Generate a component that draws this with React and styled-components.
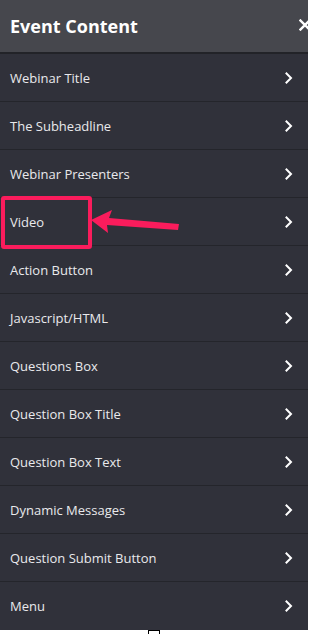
import React from "react";
import styled, { createGlobalStyle } from "styled-components";

const GlobalStyle = createGlobalStyle`
  html, body {
    margin: 0;
    padding: 0;
    background: #ffffff;
  }
  body {
    font-family: "Open Sans", "Liberation Sans", sans-serif;
  }
`;

const items = [
  "Webinar Title",
  "The Subheadline",
  "Webinar Presenters",
  "Video",
  "Action Button",
  "Javascript/HTML",
  "Questions Box",
  "Question Box Title",
  "Question Box Text",
  "Dynamic Messages",
  "Question Submit Button",
  "Menu",
];

export default function App() {
  return (
    <>
      <GlobalStyle />
      <Panel>
        <Header>
          <Title>Event Content</Title>
          <Close viewBox="0 0 12 12">
            <path
              d="M1.5 1.5 L10.5 10.5 M10.5 1.5 L1.5 10.5"
              stroke="#ffffff"
              strokeWidth="2.4"
              strokeLinecap="square"
            />
          </Close>
        </Header>
        <List>
          {items.map((label) => (
            <Row key={label}>
              <Label>{label}</Label>
              <Chevron viewBox="0 0 8 12">
                <path
                  d="M1.5 1.5 L6 6 L1.5 10.5"
                  fill="none"
                  stroke="#ffffff"
                  strokeWidth="2"
                  strokeLinecap="square"
                />
              </Chevron>
              {label === "Video" && (
                <>
                  <Highlight />
                  <Arrow viewBox="0 0 100 30">
                    <polygon
                      points="0,11 21,1 18,9 88,15 87,21 16,16 17,24"
                      fill="#fa1c5c"
                    />
                  </Arrow>
                </>
              )}
            </Row>
          ))}
        </List>
      </Panel>
      <Marker />
    </>
  );
}

const Panel = styled.div`
  width: 308px;
  background: #30313a;
  overflow: hidden;
`;

const Header = styled.div`
  position: relative;
  height: 52px;
  display: flex;
  align-items: center;
  padding-left: 10px;
  background: #46474d;
  border-bottom: 2px solid #222328;
`;

const Title = styled.h1`
  margin: 0;
  font-size: 18px;
  font-weight: 700;
  color: #ffffff;
`;

const Close = styled.svg`
  position: absolute;
  right: -3px;
  top: 19px;
  width: 12px;
  height: 12px;
`;

const List = styled.div`
  display: flex;
  flex-direction: column;
`;

const Row = styled.div`
  position: relative;
  height: 47px;
  display: flex;
  align-items: center;
  justify-content: space-between;
  padding: 0 15px 0 10px;
  border-bottom: 1px solid #24252b;
  &:last-child {
    border-bottom: none;
    height: 48px;
  }
`;

const Label = styled.span`
  font-size: 13px;
  color: #e9e9ec;
`;

const Chevron = styled.svg`
  width: 8px;
  height: 12px;
`;

const Highlight = styled.div`
  position: absolute;
  left: 1px;
  top: -2px;
  width: 83px;
  height: 45px;
  border: 4px solid #fa1c5c;
  border-radius: 3px;
`;

const Arrow = styled.svg`
  position: absolute;
  left: 91px;
  top: 11px;
  width: 100px;
  height: 30px;
`;

const Marker = styled.div`
  width: 10px;
  height: 4px;
  margin-left: 148px;
  border: 1px solid #000000;
  border-bottom: none;
`;
